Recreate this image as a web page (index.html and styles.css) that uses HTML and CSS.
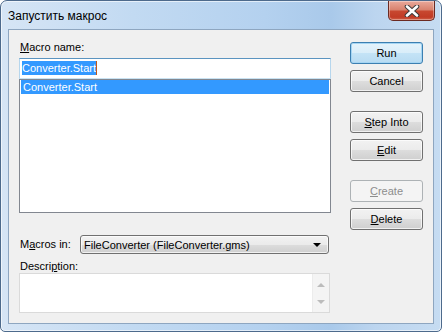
FILE: index.html
```html
<!DOCTYPE html>
<html lang="ru">
<head>
    <meta charset="UTF-8">
    <title>Запустить макрос</title>
    <link rel="stylesheet" href="styles.css">
</head>
<body>
    <div class="window">
        <div class="titlebar">
            <span class="title">Запустить макрос</span>
            <button class="close-btn">
                <svg width="16" height="12" viewBox="0 0 16 12">
                    <path d="M3 1.5 L13 10.5 M13 1.5 L3 10.5" stroke="#3b3b3b" stroke-width="4.6" stroke-linecap="round"/>
                    <path d="M3 1.5 L13 10.5 M13 1.5 L3 10.5" stroke="#ffffff" stroke-width="2.6" stroke-linecap="round"/>
                </svg>
            </button>
        </div>

        <div class="client">
            <div class="left-col">
                <div class="label"><u>M</u>acro name:</div>
                <div class="name-input"><span class="sel-text">Converter.Start</span><span class="caret"></span></div>
                <div class="listbox">
                    <div class="list-row selected">Converter.Start</div>
                </div>

                <div class="macros-in">
                    <span class="label inline">M<u>a</u>cros in:</span>
                    <div class="combo">
                        <span>FileConverter (FileConverter.gms)</span>
                        <span class="combo-arrow"></span>
                    </div>
                </div>

                <div class="label desc-label">Descri<u>p</u>tion:</div>
                <div class="desc-box">
                    <div class="desc-text"></div>
                    <div class="scrollbar">
                        <span class="arrow up"></span>
                        <span class="arrow down"></span>
                    </div>
                </div>
            </div>

            <div class="right-col">
                <button class="btn default">Run</button>
                <button class="btn">Cancel</button>
                <button class="btn group-start"><u>S</u>tep Into</button>
                <button class="btn"><u>E</u>dit</button>
                <button class="btn group-start" disabled><u>C</u>reate</button>
                <button class="btn"><u>D</u>elete</button>
            </div>
        </div>
    </div>
</body>
</html>
```

FILE: styles.css
```css
body {
    margin: 0;
    background: #ffffff;
    font-family: "Liberation Sans", Arial, sans-serif;
    font-size: 11px;
    color: #000;
}

.window {
    width: 442px;
    height: 332px;
    box-sizing: border-box;
    border: 1px solid #4d6a8c;
    border-radius: 7px 7px 5px 5px;
    padding: 0 7px 7px 7px;
    display: flex;
    flex-direction: column;
    background: linear-gradient(90deg, #d6e5f5 0%, #c2daf2 30%, #b4d1ef 60%, #a9c9ea 75%, #bcd5ef 85%, #c6dcf2 100%);
    box-shadow: inset 0 0 0 1px rgba(255,255,255,0.6);
}

.titlebar {
    height: 28px;
    display: flex;
    justify-content: space-between;
    align-items: flex-start;
}
.title {
    font-size: 12px;
    margin-top: 8px;
    margin-left: 0;
    color: #000;
}
.close-btn {
    width: 47px;
    height: 20px;
    margin-top: 0;
    margin-right: -1px;
    padding: 0;
    border: 1px solid #6b2a22;
    border-top: none;
    border-radius: 0 0 5px 5px;
    background: linear-gradient(#e9a99b 0%, #d9836f 45%, #c7472f 55%, #c13b25 85%, #d0634a 100%);
    box-shadow: inset 0 0 0 1px rgba(255,255,255,0.35);
    display: flex;
    align-items: center;
    justify-content: center;
}

.client {
    flex: 1;
    border: 1px solid #8ea6c0;
    background: #f0f0f0;
    display: flex;
    align-items: flex-start;
}

.left-col {
    width: 312px;
    margin-left: 10px;
    padding-top: 11px;
    display: flex;
    flex-direction: column;
}
.label {
    height: 13px;
    line-height: 13px;
    padding-left: 1px;
}

.name-input {
    margin-top: 4px;
    height: 21px;
    box-sizing: border-box;
    border: 1px solid;
    border-color: #5b94c0 #b6d6ed #c8e2f2 #b6d6ed;
    background: #fff;
    padding: 2px 0 0 2px;
    display: flex;
    align-items: flex-start;
}
.sel-text {
    background: #3399ff;
    color: #fff;
    height: 14px;
    line-height: 14px;
}
.caret {
    width: 1px;
    height: 14px;
    background: #c05a1a;
}

.listbox {
    height: 134px;
    box-sizing: border-box;
    border: 1px solid #828790;
    background: #fff;
    padding: 0 1px;
}
.list-row {
    height: 14px;
    line-height: 14px;
    padding-left: 2px;
}
.list-row.selected {
    background: #3399ff;
    color: #fff;
}

.macros-in {
    margin-top: 22px;
    display: flex;
    align-items: center;
}
.label.inline {
    width: 60px;
    padding-left: 1px;
}
.combo {
    width: 249px;
    height: 19px;
    box-sizing: border-box;
    border: 1px solid #707070;
    border-radius: 3px;
    background: linear-gradient(#f2f2f2 0%, #ebebeb 50%, #dddddd 51%, #cfcfcf 100%);
    box-shadow: inset 0 0 0 1px rgba(255,255,255,0.7);
    display: flex;
    align-items: center;
    justify-content: space-between;
    padding: 0 7px 0 3px;
}
.combo-arrow {
    width: 0;
    height: 0;
    border-left: 4px solid transparent;
    border-right: 4px solid transparent;
    border-top: 4px solid #000;
}

.desc-label {
    margin-top: 6px;
}
.desc-box {
    width: 311px;
    height: 40px;
    box-sizing: border-box;
    border: 1px solid #dadada;
    background: #fff;
    display: flex;
}
.desc-text {
    flex: 1;
}
.scrollbar {
    width: 17px;
    background: #f4f4f4;
    border-left: 1px solid #ececec;
    display: flex;
    flex-direction: column;
    justify-content: space-between;
    align-items: center;
    padding: 9px 0 8px;
    box-sizing: border-box;
}
.arrow {
    width: 0;
    height: 0;
    border-left: 4px solid transparent;
    border-right: 4px solid transparent;
}
.arrow.up { border-bottom: 4px solid #bcbcbc; }
.arrow.down { border-top: 4px solid #bcbcbc; }

.right-col {
    margin-left: 19px;
    padding-top: 12px;
    display: flex;
    flex-direction: column;
    gap: 6px;
}
.btn {
    width: 73px;
    height: 22px;
    box-sizing: border-box;
    padding: 0;
    font-family: "Liberation Sans", Arial, sans-serif;
    font-size: 11px;
    color: #000;
    border: 1px solid #707070;
    border-radius: 3px;
    background: linear-gradient(#f2f2f2 0%, #ebebeb 50%, #dddddd 51%, #cfcfcf 100%);
    box-shadow: inset 0 0 0 1px rgba(255,255,255,0.7);
}
.btn.group-start {
    margin-top: 13px;
}
.btn.default {
    border-color: #3c7fb1;
    background: linear-gradient(#e5f3fb 0%, #d9edf9 50%, #c4e3f6 51%, #b8dbf2 100%);
    box-shadow: inset 0 0 0 1px #a5d5f3;
}
.btn:disabled {
    color: #8d8d8d;
    border-color: #adb2b5;
    background: #f4f4f4;
    box-shadow: none;
}
```
